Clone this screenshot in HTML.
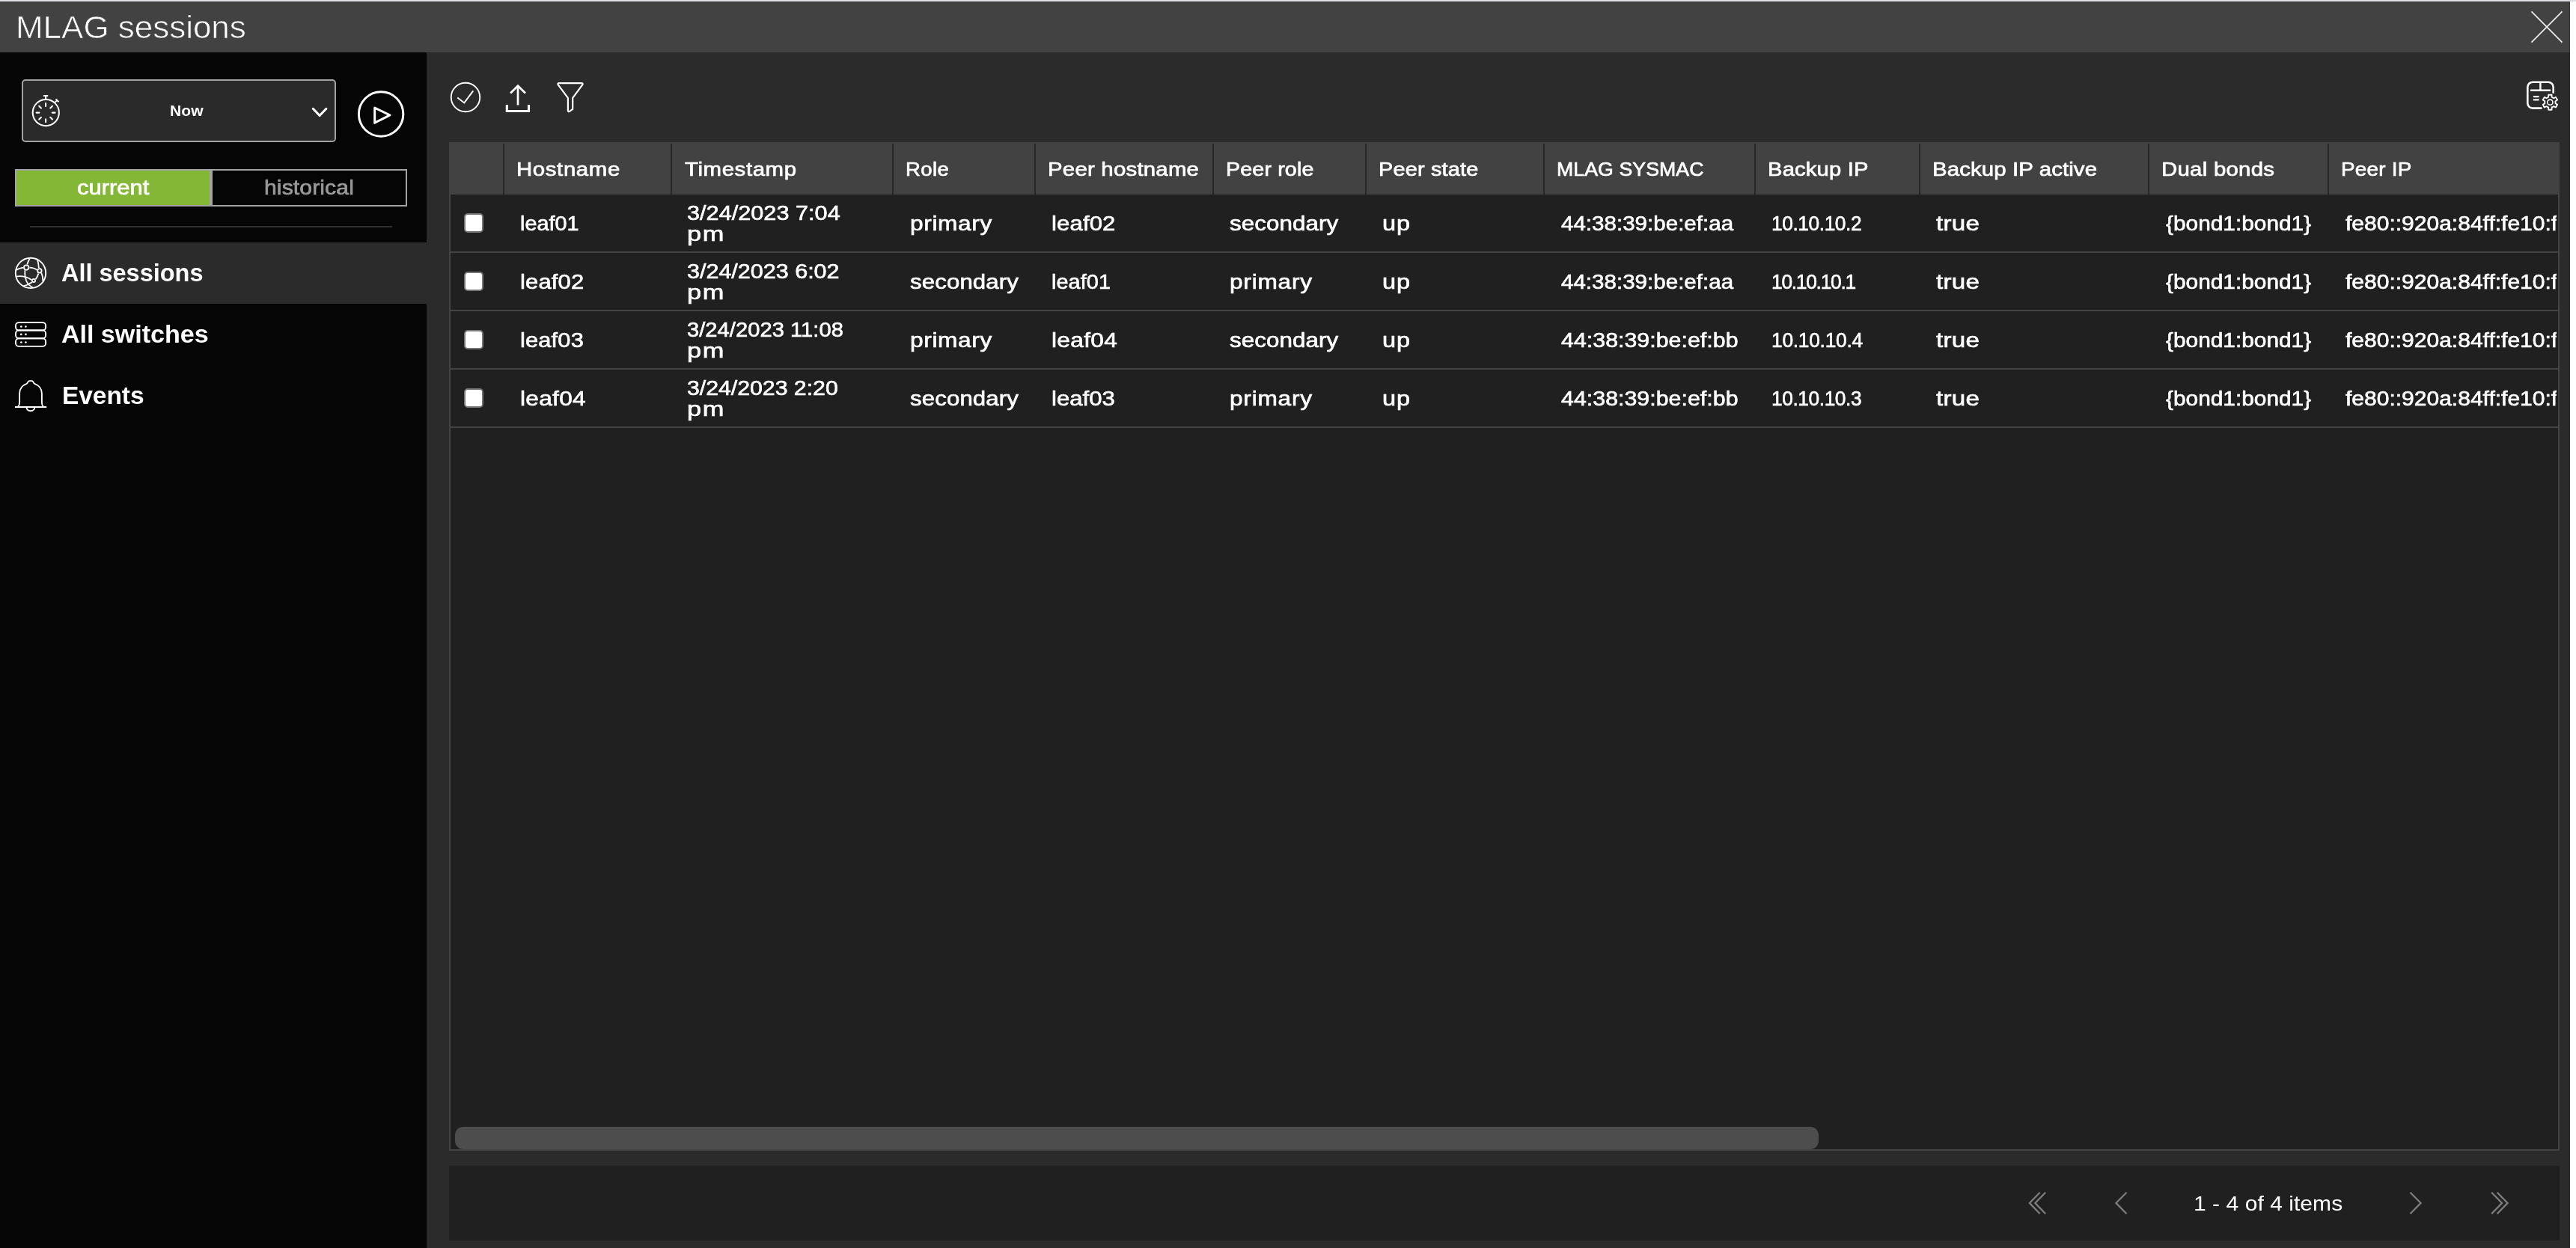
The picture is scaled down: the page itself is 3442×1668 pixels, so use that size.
<!DOCTYPE html>
<html lang="en"><head><meta charset="utf-8"><title>MLAG sessions</title>
<style>
html,body{margin:0;padding:0}
body{width:3442px;height:1668px;overflow:hidden;background:#fff;position:relative;will-change:transform;font-family:"Liberation Sans",sans-serif;color:#fff}
div,span,svg{position:absolute;box-sizing:border-box}
.t{white-space:nowrap;transform-origin:0 50%}
#strip{left:0;top:0;width:3442px;height:2px;background:#dfdfe3}
#app{left:0;top:2px;width:3434px;height:1666px;background:#2b2b2b}
#hdr{left:0;top:2px;width:3434px;height:68px;background:#424242;border-top:1px solid #383838;border-right:1px solid #363636}
#title{left:21px;top:2px;height:68px;line-height:68px;font-size:43px;color:#fff;-webkit-text-stroke:0.7px #424242}
#side{left:0;top:70px;width:570px;height:1598px;background:#050505}
#sel{left:29px;top:106px;width:420px;height:84px;border:2px solid #a3a3a3;border-radius:5px;background:#2a2a2a}
#now{left:227px;top:106px;height:84px;line-height:84px;font-size:21px;font-weight:bold}
.tg{top:226px;height:50px;width:262px;border:2px solid #a3a3a3;line-height:46px;font-size:28px;-webkit-text-stroke:0.7px}
#cur{left:20px;background:#85b737;color:#fff}
#his{left:282px;background:#050505;color:#9a9a9a}
#hr{left:40px;top:302px;width:484px;height:2px;background:#2e2e2e}
.nav{left:0;width:570px;height:82px}
.nav .t{left:82px;top:-1.5px;height:82px;line-height:82px;font-size:34px;font-weight:bold}
#n1{top:324px;background:#2b2b2b}
#n2{top:406px}
#n3{top:488px}
#tbl{left:600px;top:190px;width:2820px;height:1348px;overflow:hidden;background:#202020}
#thead{left:0;top:0;width:2820px;height:70px;background:#424242}
.hd{top:2px;width:2px;height:68px;background:#262626}
.hl{top:0.5px;height:70px;line-height:71px;font-size:26px;-webkit-text-stroke:0.7px #fff}
#tb{left:0;top:70px;width:2820px;height:1278px;border:2px solid #444;border-top:none}
.row{left:0;width:2818px;height:78px}
.rl{left:2px;width:2816px;height:2px;background:#444}
.c{top:0.5px;height:76px;line-height:76px;font-size:28px;-webkit-text-stroke:0.65px #fff}
.c2{top:10.5px;height:56px;line-height:28px;font-size:28px;-webkit-text-stroke:0.65px #fff}
.c2 span{position:static;display:block;white-space:nowrap;transform-origin:0 50%}
.cb{left:20px;top:25px;width:26px;height:26px;border:2px solid #767676;border-radius:5px;background:#fff}
#clip{left:0;top:0;width:2816px;height:1346px;overflow:hidden}
#thumb{left:8px;top:1316px;width:1822px;height:30px;border-radius:11px;background:#4d4d4d}
#pager{left:600px;top:1558px;width:2820px;height:100px;background:#202020}
#ptxt{left:2331px;top:1px;height:100px;line-height:100px;font-size:28px;color:#fff}
#ico{left:0;top:0;width:3442px;height:1668px;fill:none;stroke:#fff;stroke-linecap:butt;stroke-linejoin:miter}
</style></head>
<body>
<div id="strip"></div>
<div id="app"></div>
<div id="hdr"></div><span id="title" class="t" style="transform:scaleX(1.023);letter-spacing:-0.02px;">MLAG sessions</span>
<div id="side"></div>
<div id="sel"></div><span id="now" class="t" style="transform:scaleX(1.002);letter-spacing:0.14px;margin-left:0.2px;">Now</span>
<div id="cur" class="tg"><span class="t" id="curt" style="left:85px;top:0;transform:scaleX(1.106);letter-spacing:-0.02px;margin-left:-4.2px;">current</span></div>
<div id="his" class="tg"><span class="t" id="hist" style="left:74px;top:0;transform:scaleX(1.076);letter-spacing:0.10px;margin-left:-4.8px;">historical</span></div>
<div id="hr"></div>
<div id="n1" class="nav"><span class="t" id="n1t" style="transform:scaleX(0.956);letter-spacing:-0.02px;margin-left:-0.2px;">All sessions</span></div>
<div id="n2" class="nav"><span class="t" id="n2t" style="transform:scaleX(1.004);letter-spacing:-0.06px;margin-left:-0.2px;">All switches</span></div>
<div id="n3" class="nav"><span class="t" id="n3t" style="left:84px;transform:scaleX(0.985);letter-spacing:-0.06px;margin-left:-0.6px;">Events</span></div>
<div id="tbl">
<div id="thead">
<div class="hd" style="left:72px"></div>
<span class="hl t" id="h1" style="left:91px;transform:scaleX(1.130);letter-spacing:0.55px;margin-left:-0.8px;">Hostname</span>
<div class="hd" style="left:296px"></div>
<span class="hl t" id="h2" style="left:315px;transform:scaleX(1.130);letter-spacing:0.53px;margin-left:0.3px;">Timestamp</span>
<div class="hd" style="left:592px"></div>
<span class="hl t" id="h3" style="left:611px;transform:scaleX(1.058);letter-spacing:0.42px;margin-left:-0.6px;">Role</span>
<div class="hd" style="left:782px"></div>
<span class="hl t" id="h4" style="left:801px;transform:scaleX(1.130);letter-spacing:0.20px;margin-left:-0.8px;">Peer hostname</span>
<div class="hd" style="left:1020px"></div>
<span class="hl t" id="h5" style="left:1039px;transform:scaleX(1.102);letter-spacing:0.12px;margin-left:-0.6px;">Peer role</span>
<div class="hd" style="left:1224px"></div>
<span class="hl t" id="h6" style="left:1243px;transform:scaleX(1.111);letter-spacing:0.16px;margin-left:-0.8px;">Peer state</span>
<div class="hd" style="left:1462px"></div>
<span class="hl t" id="h7" style="left:1481px;transform:scaleX(1.026);letter-spacing:0.08px;margin-left:-0.8px;">MLAG SYSMAC</span>
<div class="hd" style="left:1744px"></div>
<span class="hl t" id="h8" style="left:1763px;transform:scaleX(1.122);letter-spacing:0.17px;margin-left:-0.6px;">Backup IP</span>
<div class="hd" style="left:1964px"></div>
<span class="hl t" id="h9" style="left:1983px;transform:scaleX(1.130);letter-spacing:0.10px;margin-left:-0.8px;">Backup IP active</span>
<div class="hd" style="left:2270px"></div>
<span class="hl t" id="h10" style="left:2289px;transform:scaleX(1.130);letter-spacing:0.23px;margin-left:-0.8px;">Dual bonds</span>
<div class="hd" style="left:2510px"></div>
<span class="hl t" id="h11" style="left:2529px;transform:scaleX(1.071);letter-spacing:0.21px;margin-left:-0.8px;">Peer IP</span>
</div>
<div id="tb"></div>
<div class="rl" style="top:146px"></div>
<div class="rl" style="top:224px"></div>
<div class="rl" style="top:302px"></div>
<div class="rl" style="top:380px"></div>
<div id="clip">
<div class="row" style="top:70px"><div class="cb"></div>
<span class="c t" id="r0c0" style="left:95px;transform:scaleX(1.027);letter-spacing:0.05px;margin-left:0.2px;">leaf01</span>
<div class="c2" style="left:319px"><span id="r0c1a" style="transform:scaleX(1.094);letter-spacing:0.02px;margin-left:-1.0px;">3/24/2023 7:04</span><span id="r0c1b" style="transform:scaleX(1.227);letter-spacing:1.32px;margin-left:-1.5px;">pm</span></div>
<span class="c t" id="r0c2" style="left:615px;transform:scaleX(1.130);letter-spacing:0.55px;margin-left:0.5px;">primary</span>
<span class="c t" id="r0c3" style="left:805px;transform:scaleX(1.110);letter-spacing:0.13px;margin-left:0.1px;">leaf02</span>
<span class="c t" id="r0c4" style="left:1043px;transform:scaleX(1.119);letter-spacing:0.07px;margin-left:0.2px;">secondary</span>
<span class="c t" id="r0c5" style="left:1247px;transform:scaleX(1.159);letter-spacing:0.86px;margin-left:0.2px;">up</span>
<span class="c t" id="r0c6" style="left:1485px;transform:scaleX(1.054);letter-spacing:0.02px;margin-left:1.1px;">44:38:39:be:ef:aa</span>
<span class="c t" id="r0c7" style="left:1767px;transform:scaleX(0.940);letter-spacing:-0.45px;margin-left:-0.2px;">10.10.10.2</span>
<span class="c t" id="r0c8" style="left:1987px;transform:scaleX(1.184);letter-spacing:0.22px;margin-left:0.2px;">true</span>
<span class="c t" id="r0c9" style="left:2293px;transform:scaleX(1.067);letter-spacing:-0.02px;margin-left:0.7px;">{bond1:bond1}</span>
<span class="c t" id="r0c10" style="left:2533px;transform:scaleX(1.072);margin-left:0.7px;">fe80::920a:84ff:fe10:f</span>
</div>
<div class="row" style="top:148px"><div class="cb"></div>
<span class="c t" id="r1c0" style="left:95px;transform:scaleX(1.107);letter-spacing:0.12px;margin-left:0.2px;">leaf02</span>
<div class="c2" style="left:319px"><span id="r1c1a" style="transform:scaleX(1.091);letter-spacing:-0.02px;margin-left:-1.0px;">3/24/2023 6:02</span><span id="r1c1b" style="transform:scaleX(1.227);letter-spacing:1.32px;margin-left:-1.5px;">pm</span></div>
<span class="c t" id="r1c2" style="left:615px;transform:scaleX(1.114);letter-spacing:0.11px;margin-left:0.8px;">secondary</span>
<span class="c t" id="r1c3" style="left:805px;transform:scaleX(1.030);letter-spacing:0.08px;margin-left:0.1px;">leaf01</span>
<span class="c t" id="r1c4" style="left:1043px;transform:scaleX(1.130);letter-spacing:0.67px;margin-left:0.4px;">primary</span>
<span class="c t" id="r1c5" style="left:1247px;transform:scaleX(1.159);letter-spacing:0.86px;margin-left:0.2px;">up</span>
<span class="c t" id="r1c6" style="left:1485px;transform:scaleX(1.054);letter-spacing:0.02px;margin-left:1.1px;">44:38:39:be:ef:aa</span>
<span class="c t" id="r1c7" style="left:1767px;transform:scaleX(0.940);letter-spacing:-1.33px;margin-left:-0.2px;">10.10.10.1</span>
<span class="c t" id="r1c8" style="left:1987px;transform:scaleX(1.184);letter-spacing:0.22px;margin-left:0.2px;">true</span>
<span class="c t" id="r1c9" style="left:2293px;transform:scaleX(1.067);letter-spacing:-0.02px;margin-left:0.7px;">{bond1:bond1}</span>
<span class="c t" id="r1c10" style="left:2533px;transform:scaleX(1.072);margin-left:0.7px;">fe80::920a:84ff:fe10:f</span>
</div>
<div class="row" style="top:226px"><div class="cb"></div>
<span class="c t" id="r2c0" style="left:95px;transform:scaleX(1.103);letter-spacing:0.12px;margin-left:0.2px;">leaf03</span>
<div class="c2" style="left:319px"><span id="r2c1a" style="transform:scaleX(1.039);letter-spacing:0.05px;margin-left:-1.0px;">3/24/2023 11:08</span><span id="r2c1b" style="transform:scaleX(1.227);letter-spacing:1.32px;margin-left:-1.5px;">pm</span></div>
<span class="c t" id="r2c2" style="left:615px;transform:scaleX(1.130);letter-spacing:0.55px;margin-left:0.5px;">primary</span>
<span class="c t" id="r2c3" style="left:805px;transform:scaleX(1.130);letter-spacing:0.30px;margin-left:0.1px;">leaf04</span>
<span class="c t" id="r2c4" style="left:1043px;transform:scaleX(1.119);letter-spacing:0.07px;margin-left:0.2px;">secondary</span>
<span class="c t" id="r2c5" style="left:1247px;transform:scaleX(1.159);letter-spacing:0.86px;margin-left:0.2px;">up</span>
<span class="c t" id="r2c6" style="left:1485px;transform:scaleX(1.081);letter-spacing:0.05px;margin-left:1.1px;">44:38:39:be:ef:bb</span>
<span class="c t" id="r2c7" style="left:1767px;transform:scaleX(0.940);letter-spacing:-0.27px;margin-left:-0.2px;">10.10.10.4</span>
<span class="c t" id="r2c8" style="left:1987px;transform:scaleX(1.184);letter-spacing:0.22px;margin-left:0.2px;">true</span>
<span class="c t" id="r2c9" style="left:2293px;transform:scaleX(1.067);letter-spacing:-0.02px;margin-left:0.7px;">{bond1:bond1}</span>
<span class="c t" id="r2c10" style="left:2533px;transform:scaleX(1.072);margin-left:0.7px;">fe80::920a:84ff:fe10:f</span>
</div>
<div class="row" style="top:304px"><div class="cb"></div>
<span class="c t" id="r3c0" style="left:95px;transform:scaleX(1.130);letter-spacing:0.25px;margin-left:0.2px;">leaf04</span>
<div class="c2" style="left:319px"><span id="r3c1a" style="transform:scaleX(1.082);letter-spacing:-0.03px;margin-left:-1.0px;">3/24/2023 2:20</span><span id="r3c1b" style="transform:scaleX(1.227);letter-spacing:1.32px;margin-left:-1.5px;">pm</span></div>
<span class="c t" id="r3c2" style="left:615px;transform:scaleX(1.114);letter-spacing:0.11px;margin-left:0.8px;">secondary</span>
<span class="c t" id="r3c3" style="left:805px;transform:scaleX(1.110);letter-spacing:0.04px;margin-left:0.1px;">leaf03</span>
<span class="c t" id="r3c4" style="left:1043px;transform:scaleX(1.130);letter-spacing:0.67px;margin-left:0.4px;">primary</span>
<span class="c t" id="r3c5" style="left:1247px;transform:scaleX(1.159);letter-spacing:0.86px;margin-left:0.2px;">up</span>
<span class="c t" id="r3c6" style="left:1485px;transform:scaleX(1.081);letter-spacing:0.05px;margin-left:1.1px;">44:38:39:be:ef:bb</span>
<span class="c t" id="r3c7" style="left:1767px;transform:scaleX(0.940);letter-spacing:-0.45px;margin-left:-0.2px;">10.10.10.3</span>
<span class="c t" id="r3c8" style="left:1987px;transform:scaleX(1.184);letter-spacing:0.22px;margin-left:0.2px;">true</span>
<span class="c t" id="r3c9" style="left:2293px;transform:scaleX(1.067);letter-spacing:-0.02px;margin-left:0.7px;">{bond1:bond1}</span>
<span class="c t" id="r3c10" style="left:2533px;transform:scaleX(1.072);margin-left:0.7px;">fe80::920a:84ff:fe10:f</span>
</div>
</div>
<div id="thumb"></div>
</div>
<div id="pager"><span id="ptxt" class="t" style="transform:scaleX(1.072);letter-spacing:0.04px;margin-left:0.2px;">1 - 4 of 4 items</span></div>
<svg id="ico" viewBox="0 0 3442 1668"><path d="M3382.5 15.4L3423.5 56.6M3423.5 15.4L3382.5 56.6" stroke-width="1.6" stroke="#f2f2f2"/>
<path d="M3411.7 124.8V116.6A6.8 6.8 0 0 0 3404.9 109.8H3384.1A6.8 6.8 0 0 0 3377.3 116.6V137.8A6.8 6.8 0 0 0 3384.1 144.6H3396.6" stroke-width="2.6" />
<path d="M3381.1 120.8H3408.2M3394.4 109.8V120.8" stroke-width="2.5" />
<path d="M3385.8 129.1H3391.7M3385.8 133.4H3391.7" stroke-width="2.3" stroke-linecap="round"/>
<path d="M3405.14 129.76L3405.28 126.72L3409.52 126.72L3409.66 129.76L3412.28 131.28L3414.98 129.87L3417.10 133.55L3414.54 135.18L3414.54 138.22L3417.10 139.85L3414.98 143.53L3412.28 142.12L3409.66 143.64L3409.52 146.68L3405.28 146.68L3405.14 143.64L3402.52 142.12L3399.82 143.53L3397.70 139.85L3400.26 138.22L3400.26 135.18L3397.70 133.55L3399.82 129.87L3402.52 131.28Z" stroke-width="1.9" stroke-linejoin="round"/>
<circle cx="3407.4" cy="136.7" r="3.6" stroke-width="1.6" />
<circle cx="622.0" cy="130.0" r="19.25" stroke-width="1.9" />
<path d="M611.3 130.6L620.3 137.4L632.3 121.4" stroke-width="1.9" />
<path d="M692 140.4V115M682.1 124.5L692 114.7L702 124.5" stroke-width="2.7" />
<path d="M677.3 139.9V148.5H706.5V139.9" stroke-width="3.1" />
<path d="M747.2 111.2H776.8Q779.6 111.2 778.2 113.4L765.2 130.9V145.9L761 148.8Q758.9 149.9 758.9 147.4V130.9L745.8 113.4Q744.4 111.2 747.2 111.2Z" stroke-width="2.2" stroke-linejoin="round"/>
<circle cx="61.3" cy="150.55" r="17.6" stroke-width="2.0" />
<path d="M61.1 128V133.4" stroke-width="2.2" />
<path d="M58 128H64.2" stroke-width="2.0" />
<path d="M73.3 136.8L76.6 134.1M74.6 132.4L78.5 136.2" stroke-width="2.0" />
<path d="M69.80 150.60L73.60 150.60M67.25 156.75L69.94 159.44M61.10 159.30L61.10 163.10M54.95 156.75L52.26 159.44M52.40 150.60L48.60 150.60M54.95 144.45L52.26 141.76M61.10 141.90L61.10 138.10M67.25 144.45L69.94 141.76" stroke-width="2.1" stroke-linecap="round"/>
<path d="M418.3 145.3L427.1 154.5L435.9 145.3" stroke-width="3.1" stroke-linecap="round" stroke-linejoin="round"/>
<circle cx="509.1" cy="152.55" r="29.7" stroke-width="3.0" />
<path d="M500.7 144.1L520.9 153.8L500.7 164.2Z" stroke-width="3.0" stroke-linejoin="round"/>
<circle cx="41.0" cy="364.9" r="20.2" stroke-width="1.9" />
<circle cx="35.2" cy="357.6" r="3.2" stroke-width="1.8" />
<circle cx="52.9" cy="361.9" r="2.7" stroke-width="1.8" />
<circle cx="45.0" cy="374.9" r="2.1" stroke-width="1.8" />
<path d="M39.8 345.3Q37.6 349.3 36.3 353.4M49.9 346.8Q51.6 352.5 51.9 358.2M39.4 357.6Q45.6 357.8 49.4 360.8M31.0 357.7Q25.8 358.3 20.9 361.3M33.3 361.4Q32.6 368 35.0 375Q37.4 381.2 43.7 384.2M21.3 369.6Q32 367.6 42.1 373.9M51.4 365.6Q50.2 370 47.7 373.1M55.3 364.8Q57.8 370 57.4 376.2M42.7 377.3Q37.2 381.2 30.4 382.6" stroke-width="1.8" />
<rect x="21" y="431.0" width="40.1" height="10.5" rx="4.2" stroke-width="1.9"/>
<rect x="21" y="441.5" width="40.1" height="10.8" rx="4.2" stroke-width="1.9"/>
<rect x="21" y="452.3" width="40.1" height="10.6" rx="4.2" stroke-width="1.9"/>
<circle cx="28.3" cy="436.5" r="1.35" fill="#fff" stroke="none"/>
<circle cx="34.4" cy="436.5" r="1.35" fill="#fff" stroke="none"/>
<circle cx="28.3" cy="446.9" r="1.35" fill="#fff" stroke="none"/>
<circle cx="34.4" cy="446.9" r="1.35" fill="#fff" stroke="none"/>
<circle cx="28.3" cy="457.5" r="1.35" fill="#fff" stroke="none"/>
<circle cx="34.4" cy="457.5" r="1.35" fill="#fff" stroke="none"/>
<path d="M19.9 543.9H62.2" stroke-width="2.0" />
<path d="M24.2 543.4Q26.1 541.5 26.1 538V526C26.1 519.5 30 515 35.6 512.9Q36.6 512.3 36.9 511.2Q37.8 508.9 40.9 508.9Q44 508.9 44.9 511.2Q45.2 512.3 46.2 512.9C51.8 515 55.9 519.5 55.9 526V538Q55.9 541.5 57.8 543.4" stroke-width="1.9" />
<path d="M35.5 544.6A5.4 4.6 0 0 0 46.3 544.6" stroke-width="1.9" />
<path d="M2725.7 1593.7L2711.8 1607.9L2725.7 1622.2M2733.2 1593.7L2719.3 1607.9L2733.2 1622.2" stroke-width="2.3" stroke="#7d7d7d"/>
<path d="M2841.5 1593.7L2827.4 1607.9L2841.5 1622.2" stroke-width="2.3" stroke="#7d7d7d"/>
<path d="M3220.5 1593.7L3234.6 1607.9L3220.5 1622.2" stroke-width="2.3" stroke="#7d7d7d"/>
<path d="M3329.2 1593.7L3343.1 1607.9L3329.2 1622.2M3336.7 1593.7L3350.6 1607.9L3336.7 1622.2" stroke-width="2.3" stroke="#7d7d7d"/></svg>
</body></html>
